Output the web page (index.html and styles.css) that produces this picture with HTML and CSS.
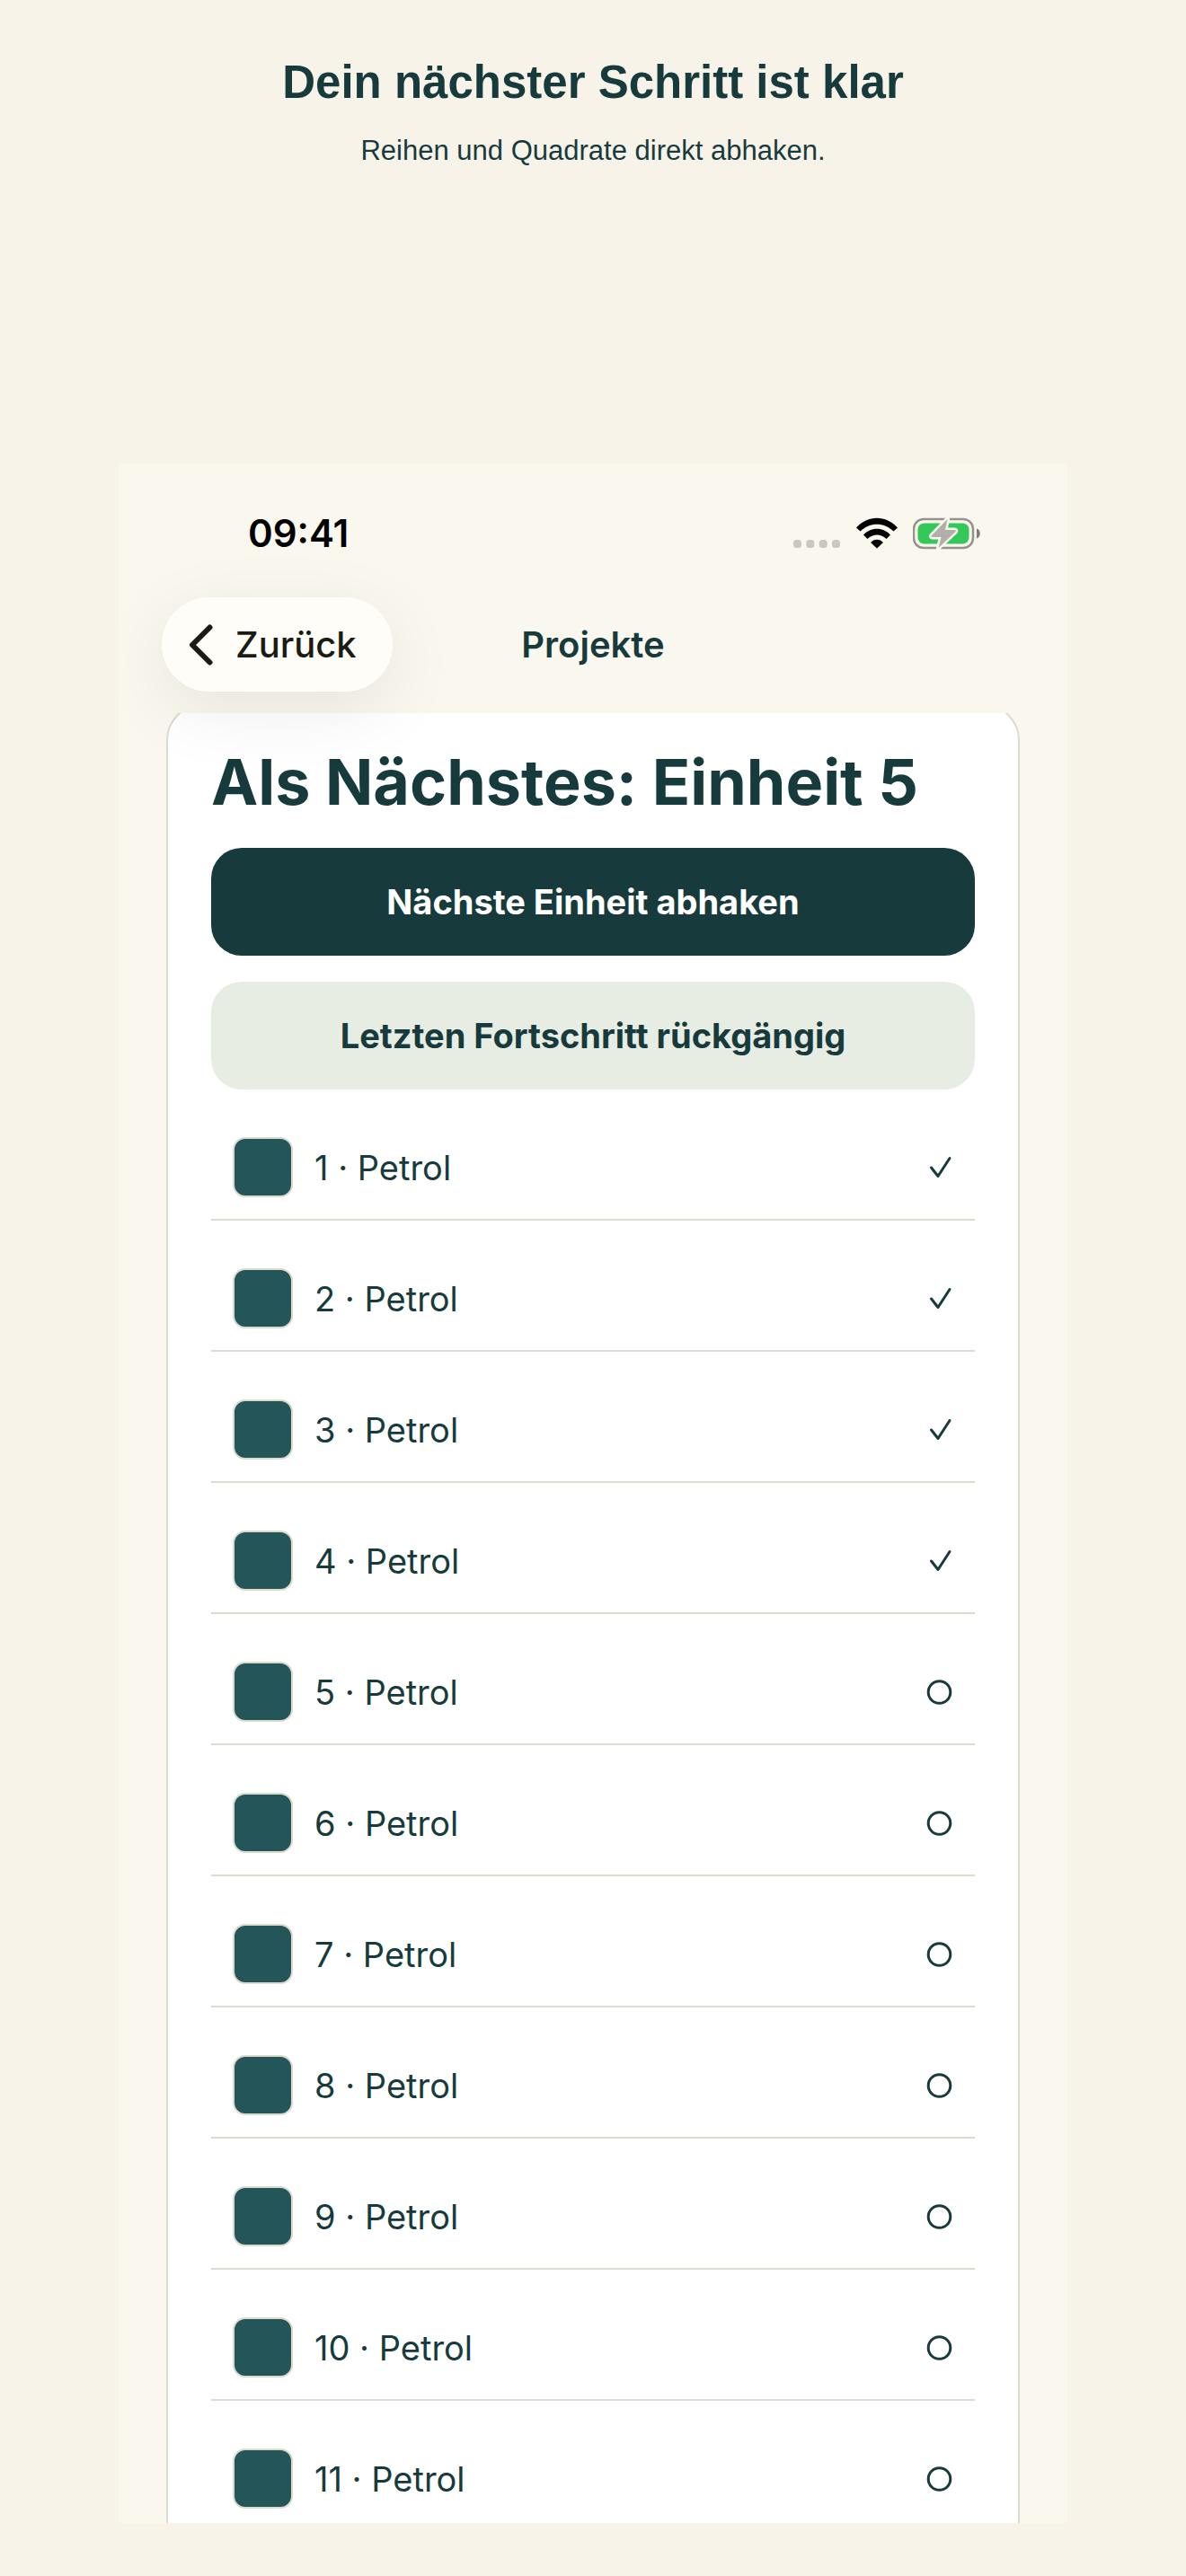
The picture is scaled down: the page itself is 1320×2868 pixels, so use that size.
FILE: index.html
```
<!DOCTYPE html>
<html lang="de">
<head>
    <meta charset="UTF-8">
    <meta name="viewport" content="width=device-width, initial-scale=1.0">
    <title>Projekte</title>
    <link rel="stylesheet" href="styles.css">
</head>
<body>
    <svg class="sprite" aria-hidden="true">
        <symbol id="check" viewBox="0 0 32 32"><path d="M7.500 16L15 25.500L28 5.500"/></symbol>
        <symbol id="circle" viewBox="0 0 32 32"><circle cx="16.500" cy="16" r="12.300"/></symbol>
    </svg>
    <header class="intro">
        <h1>Dein nächster Schritt ist klar</h1>
        <p>Reihen und Quadrate direkt abhaken.</p>
    </header>
    <main class="phone">
        <div class="status">
            <span class="time">09:41</span>
            <div class="status-icons">
                <svg width="53" height="36" viewBox="0 0 53 36" fill="#cac7c0">
                    <rect x="0" y="25" width="9" height="9" rx="3.500"/>
                    <rect x="14.300" y="25" width="9" height="9" rx="3.500"/>
                    <rect x="28.700" y="25" width="9" height="9" rx="3.500"/>
                    <rect x="43" y="25" width="9" height="9" rx="3.500"/>
                </svg>
                <svg width="46" height="36" viewBox="0 0 46 36">
                    <path d="M0 11.500C13-3 33-3 46 11.500L41.500 15.500C31 5 15 5 4.500 15.500Z"/>
                    <path d="M8 19.500C16 10.500 30 10.500 38 19.500L33.500 24C27.500 18 18.500 18 12.500 24Z"/>
                    <path d="M16 28C19.500 23.500 26.500 23.500 30 28L23 34.500Z"/>
                </svg>
                <svg width="76" height="36" viewBox="0 0 76 36">
                    <rect x="1" y="2" width="66" height="32" rx="11" fill="none" stroke="#94938d" stroke-width="2.500"/>
                    <path d="M71 12.500C76 13.500 76 22.500 71 23.500Z" fill="#7d7c78"/>
                    <rect x="5.500" y="6.500" width="57" height="23" rx="7" fill="#34c759"/>
                    <path d="M38.500 2L20.500 20.500Q20 22 22 22H31.500L28.500 34L47.500 16Q48.500 14 46 14H36Z" fill="#b0afaa" stroke="#faf7ee" stroke-width="5" stroke-linejoin="round" paint-order="stroke"/>
                </svg>
            </div>
        </div>
        <nav class="nav">
            <button class="back" type="button">
                <svg width="28" height="46" viewBox="0 0 28 46"><path d="M23.500 3.500L4 23L23.500 42.500"/></svg>
                Zurück
            </button>
            <h2>Projekte</h2>
        </nav>
        <div class="scroll">
            <section class="card">
                <h3>Als Nächstes: Einheit 5</h3>
                <button class="btn primary" type="button">Nächste Einheit abhaken</button>
                <button class="btn secondary" type="button">Letzten Fortschritt rückgängig</button>
                <label class="row"><span class="swatch"></span>1 · Petrol<input type="checkbox" checked><svg class="done"><use href="#check"/></svg><svg class="open"><use href="#circle"/></svg></label>
                <label class="row"><span class="swatch"></span>2 · Petrol<input type="checkbox" checked><svg class="done"><use href="#check"/></svg><svg class="open"><use href="#circle"/></svg></label>
                <label class="row"><span class="swatch"></span>3 · Petrol<input type="checkbox" checked><svg class="done"><use href="#check"/></svg><svg class="open"><use href="#circle"/></svg></label>
                <label class="row"><span class="swatch"></span>4 · Petrol<input type="checkbox" checked><svg class="done"><use href="#check"/></svg><svg class="open"><use href="#circle"/></svg></label>
                <label class="row"><span class="swatch"></span>5 · Petrol<input type="checkbox"><svg class="done"><use href="#check"/></svg><svg class="open"><use href="#circle"/></svg></label>
                <label class="row"><span class="swatch"></span>6 · Petrol<input type="checkbox"><svg class="done"><use href="#check"/></svg><svg class="open"><use href="#circle"/></svg></label>
                <label class="row"><span class="swatch"></span>7 · Petrol<input type="checkbox"><svg class="done"><use href="#check"/></svg><svg class="open"><use href="#circle"/></svg></label>
                <label class="row"><span class="swatch"></span>8 · Petrol<input type="checkbox"><svg class="done"><use href="#check"/></svg><svg class="open"><use href="#circle"/></svg></label>
                <label class="row"><span class="swatch"></span>9 · Petrol<input type="checkbox"><svg class="done"><use href="#check"/></svg><svg class="open"><use href="#circle"/></svg></label>
                <label class="row"><span class="swatch"></span>10 · Petrol<input type="checkbox"><svg class="done"><use href="#check"/></svg><svg class="open"><use href="#circle"/></svg></label>
                <label class="row"><span class="swatch"></span>11 · Petrol<input type="checkbox"><svg class="done"><use href="#check"/></svg><svg class="open"><use href="#circle"/></svg></label>
            </section>
        </div>
    </main>
</body>
</html>
```

FILE: styles.css
```
*
{
    box-sizing: border-box;
}
body
{
    margin: 0;
    height: 100vh;
    padding-bottom: 59px;
    display: flex;
    flex-direction: column;
    align-items: center;
    background-color: #f8f3e8;
    color: #173b3d;
    font-family: Inter, "Liberation Sans", sans-serif;
}
h1, h2, h3, p
{
    margin: 0;
}
.sprite
{
    display: none;
}
.intro
{
    min-height: 516px;
    padding-top: 60px;
    text-align: center;
    font-family: "Liberation Sans", Arial, sans-serif;
}
.intro h1
{
    font-size: 51px;
    line-height: 64px;
}
.intro p
{
    margin-top: 24px;
    font-size: 31px;
    line-height: 40px;
}
.phone
{
    width: 80%;
    flex: 1;
    min-height: 0;
    display: flex;
    flex-direction: column;
    overflow: hidden;
    background-color: #faf7ee;
}
.status
{
    height: 149px;
    flex: none;
    padding: 6px 96px 0 144px;
    display: flex;
    align-items: center;
    justify-content: space-between;
    color: #000;
}
.time
{
    font-size: 42px;
    font-weight: 600;
}
.status-icons
{
    display: flex;
    gap: 17px;
}
.nav
{
    position: relative;
    z-index: 1;
    flex: none;
    display: grid;
    grid-template-columns: 1fr auto 1fr;
    align-items: center;
    padding: 0 48px;
    margin-bottom: 24px;
}
.nav h2
{
    font-size: 40px;
    font-weight: 600;
}
.back
{
    justify-self: start;
    height: 105px;
    padding: 0 40px 0 30px;
    display: flex;
    align-items: center;
    gap: 24px;
    border: none;
    border-radius: 53px;
    background-color: #fefdf8;
    box-shadow: 0 20px 80px rgba(0, 0, 0, 0.08);
    color: #1b1a14;
    font-family: inherit;
    font-size: 40px;
    font-weight: 500;
}
.back svg
{
    fill: none;
    stroke: #1b1a14;
    stroke-width: 6;
    stroke-linecap: round;
    stroke-linejoin: round;
}
.scroll
{
    flex: 1;
    min-height: 0;
    overflow: hidden;
    padding: 0 53px;
}
.card
{
    margin-top: -10px;
    padding: 41px 48px;
    display: flex;
    flex-direction: column;
    gap: 29px;
    border: 2px solid #dcdbd0;
    border-radius: 40px;
    background-color: #fff;
}
.card h3
{
    font-size: 70px;
    line-height: 88px;
    font-weight: 700;
    white-space: nowrap;
}
.btn
{
    height: 120px;
    border: none;
    border-radius: 34px;
    font-family: inherit;
    font-size: 38px;
    font-weight: 700;
}
.primary
{
    background-color: #173b3d;
    color: #fff;
}
.secondary
{
    background-color: #e8ede4;
    color: #173b3d;
}
.row
{
    height: 117px;
    padding: 0 24px;
    display: flex;
    align-items: center;
    border-bottom: 2px solid #dcdbd0;
    font-size: 38px;
}
.swatch
{
    width: 67px;
    height: 67px;
    margin-right: 24px;
    border: 2px solid #dcdbd0;
    border-radius: 14px;
    background-color: #245659;
}
.row input
{
    appearance: none;
    width: 1px;
    height: 1px;
    margin: 0 0 0 auto;
}
.row svg
{
    width: 32px;
    height: 32px;
    fill: none;
    stroke: #173b3d;
    stroke-width: 3;
    stroke-linecap: round;
    stroke-linejoin: round;
}
.done
{
    display: none;
}
.row input:checked ~ .done
{
    display: block;
}
.row input:checked ~ .open
{
    display: none;
}
```
